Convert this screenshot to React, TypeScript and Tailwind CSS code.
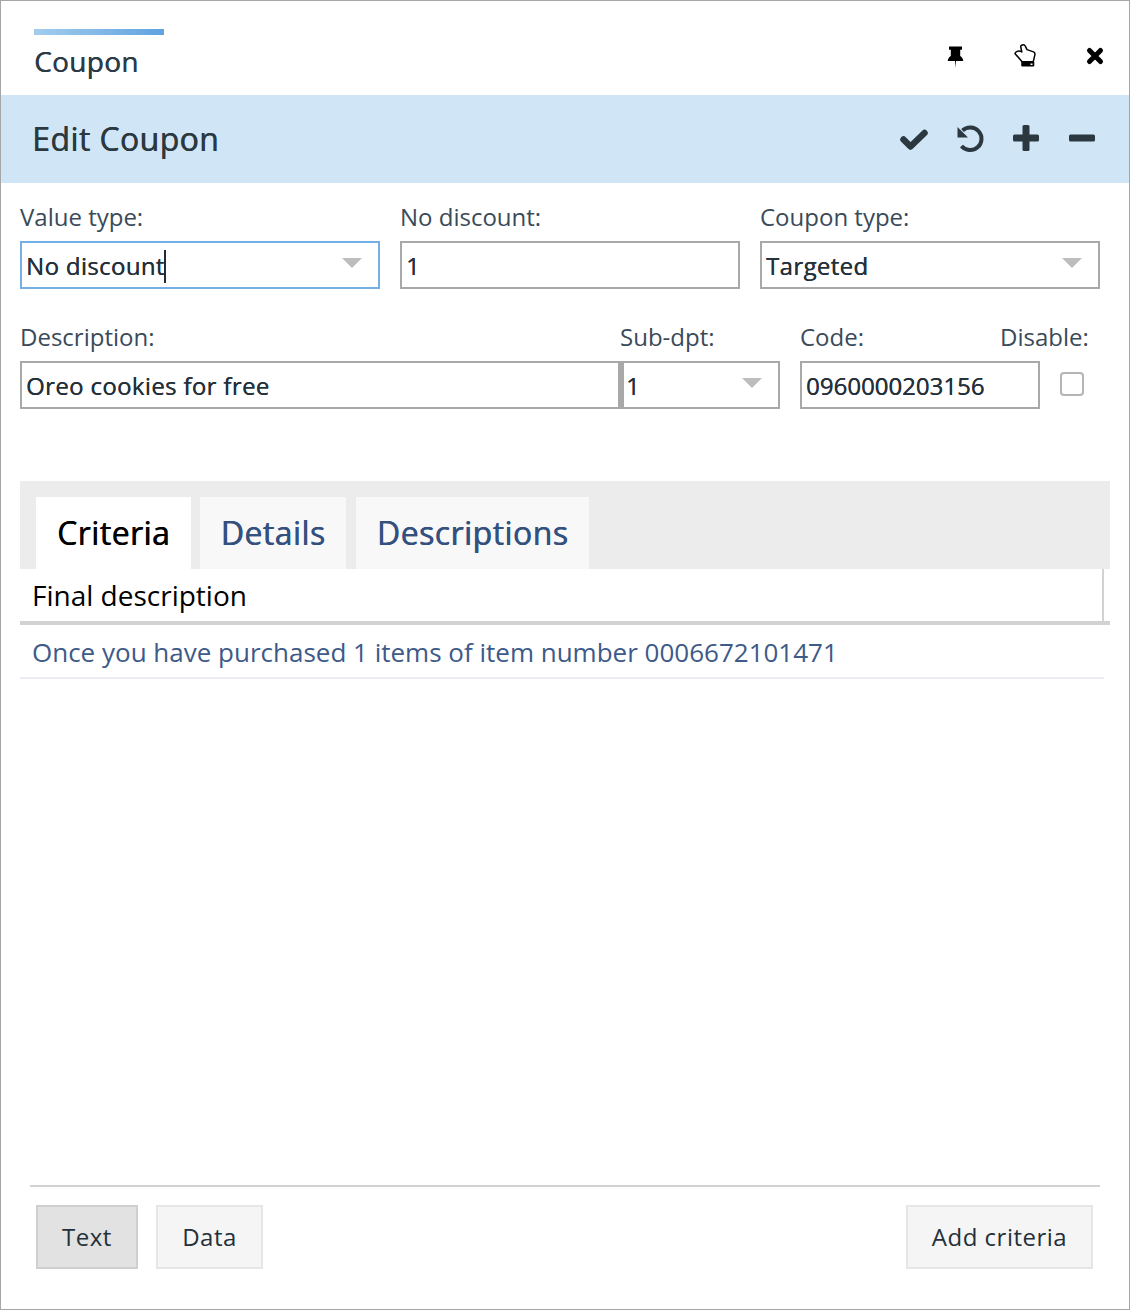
import { type ReactNode } from "react";

function Label({ children, className = "" }: { children: ReactNode; className?: string }) {
  return <div className={`h-[42px] text-[24px] leading-[36px] text-[#3a4a58] ${className}`}>{children}</div>;
}

function Field({ children, className = "", arrow = false }: { children: ReactNode; className?: string; arrow?: boolean }) {
  return (
    <div className={`flex h-[48px] items-center justify-between border-2 border-[#a9a9a9] pl-[4px] pr-[16px] pt-[2px] text-[24px] text-[#24303a] [text-shadow:0.3px_0_0_currentColor] ${className}`}>
      <span className="flex items-center">{children}</span>
      {arrow && <span className="mb-[6px] h-0 w-0 border-x-[10px] border-t-[10px] border-x-transparent border-t-[#bdbdbd]" />}
    </div>
  );
}

function Btn({ children, className = "", active = false }: { children: ReactNode; className?: string; active?: boolean }) {
  return (
    <div className={`flex h-[64px] items-center justify-center border-2 text-[24px] tracking-[0.5px] text-[#24303a] ${active ? "border-[#cfcfcf] bg-[#e2e2e2]" : "border-[#e6e6e6] bg-[#f5f5f5]"} ${className}`}>
      {children}
    </div>
  );
}

function Pin() {
  return (
    <svg viewBox="0 0 24 26" className="h-[26px] w-[24px]" fill="#000">
      <path d="M6 3.500h13v3.200h-1.800v6.300c1.500 1 3 2.500 3 5h-7.200l-.5 7-.5-7H4.800c0-2.500 1.500-4 3-5V6.700H6z" />
    </svg>
  );
}

function Hand() {
  return (
    <svg viewBox="0 0 24 24" className="h-[24px] w-[24px]" fill="none" stroke="#000" strokeWidth="1.500" strokeLinejoin="round">
      <path d="M10.300.8c-1.500 0-2.800.8-2.500 2.200l1 5c-1.500-1-3.300-1.200-4.600-.6-1.300.6-2.300 1.500-2.100 2.300l7 8h11.200l1.500-6.500c.3-1.300 0-2.800-1.300-3.300l-6.500-2.300-1.700-3.500c-.3-.8-1-1.300-2-1.300z" fill="#fff" />
      <path d="M8.800 18h12v4h-12z" fill="#000" stroke="#000" strokeWidth="1" />
      <path d="M17.500 19.500h2v1.500h-2z" fill="#fff" stroke="none" />
    </svg>
  );
}

function Times() {
  return (
    <svg viewBox="0 0 24 24" className="h-[24px] w-[24px]" fill="none" stroke="#000" strokeWidth="5" strokeLinecap="round">
      <path d="M6.500 6.500l11 11M17.500 6.500l-11 11" />
    </svg>
  );
}

function Check() {
  return (
    <svg viewBox="0 0 28 28" className="h-[28px] w-[28px]" fill="none" stroke="#2b3840" strokeWidth="6.500" strokeLinecap="round" strokeLinejoin="round">
      <path d="M3.500 14.500l7 7L24.500 8" />
    </svg>
  );
}

function Undo() {
  return (
    <svg viewBox="0 0 28 28" className="h-[28px] w-[28px]" fill="none" stroke="#2b3840">
      <path d="M6.500 5.500A11.300 11.300 0 1 1 5.500 21" strokeWidth="4" />
      <path d="M1.500 2v10.500H12z" fill="#2b3840" stroke="none" />
    </svg>
  );
}

function Plus() {
  return (
    <svg viewBox="0 0 28 28" className="mb-[3px] h-[28px] w-[28px]" fill="#2b3840">
      <rect x="1" y="10.500" width="26" height="7" rx="1.500" />
      <rect x="10.500" y="1" width="7" height="26" rx="1.500" />
    </svg>
  );
}

function Minus() {
  return (
    <svg viewBox="0 0 28 28" className="mb-[3px] h-[28px] w-[28px]" fill="#2b3840">
      <rect x="1" y="10.500" width="26" height="7" rx="1.500" />
    </svg>
  );
}

export default function App() {
  return (
    <div className="flex h-[1310px] w-[1130px] flex-col border border-[#a6a6a6] bg-white font-['Open_Sans',sans-serif]">
      <div className="flex h-[94px] justify-between pl-[33px] pr-[22px]">
        <div className="mt-[28px] w-[130px]">
          <div className="h-[6px] bg-gradient-to-r from-[#a3ccee] to-[#5fa3e0]" />
          <div className="mt-[7px] text-[28px] font-medium leading-[38px] tracking-[0.3px] text-[#2b3a46] [text-shadow:0.4px_0_0_currentColor]">Coupon</div>
        </div>
        <div className="mt-[43px] flex h-[24px] items-center gap-[46px] text-black">
          <Pin />
          <Hand />
          <Times />
        </div>
      </div>

      <div className="flex h-[88px] items-center justify-between bg-[#d0e6f7] pl-[31px] pr-[33px] text-[#2b3840]">
        <div className="text-[32px] font-medium leading-[44px] tracking-[0.4px] [text-shadow:0.6px_0_0_currentColor]">Edit Coupon</div>
        <div className="flex items-center gap-[28px]">
          <Check />
          <Undo />
          <Plus />
          <Minus />
        </div>
      </div>

      <div className="px-[19px] pt-[16px]">
        <div className="flex gap-[20px]">
          <div className="w-[360px]">
            <Label>Value type:</Label>
            <Field arrow className="!border-[#74b0e6] tracking-[0.35px]">
              No discount<span className="-ml-[1px] h-[33px] w-[2px] bg-[#1d2c3a]" />
            </Field>
          </div>
          <div className="w-[340px]">
            <Label>No discount:</Label>
            <Field>1</Field>
          </div>
          <div className="w-[340px]">
            <Label>Coupon type:</Label>
            <Field arrow className="tracking-[0.35px]">Targeted</Field>
          </div>
        </div>

        <div className="mt-[30px] flex">
          <div className="w-[600px]">
            <Label>Description:</Label>
            <Field className="tracking-[0.35px]">Oreo cookies for free</Field>
          </div>
          <div className="w-[160px]">
            <Label>Sub-dpt:</Label>
            <Field arrow className="!border-l-[4px] !pl-[2px]">1</Field>
          </div>
          <div className="ml-[20px] w-[240px]">
            <Label>Code:</Label>
            <Field>0960000203156</Field>
          </div>
          <div className="w-[49px]">
            <Label className="-ml-[40px] whitespace-nowrap">Disable:</Label>
            <div className="ml-[20px] mt-[11px] h-[24px] w-[24px] rounded-[4px] border-2 border-[#b5b5b5]" />
          </div>
        </div>

        <div className="mt-[72px] flex h-[88px] w-[1090px] items-end bg-[#ececec] pl-[16px]">
          <div className="flex h-[72px] w-[155px] items-center justify-center bg-white text-[32px] font-medium tracking-[0.45px] text-black [text-shadow:0.6px_0_0_currentColor]">Criteria</div>
          <div className="ml-[9px] flex h-[72px] w-[146px] items-center justify-center bg-[#f8f8f8] text-[32px] font-medium tracking-[0.45px] text-[#34507f] [text-shadow:0.6px_0_0_currentColor]">Details</div>
          <div className="ml-[10px] flex h-[72px] w-[233px] items-center justify-center bg-[#f8f8f8] text-[32px] font-medium tracking-[0.45px] text-[#34507f] [text-shadow:0.6px_0_0_currentColor]">Descriptions</div>
        </div>
        <div className="w-[1090px] border-b-[4px] border-[#d2d2d2]">
          <div className="flex h-[52px] w-[1084px] items-center border-r-2 border-[#d2d2d2] pl-[12px] text-[28px] text-black">Final description</div>
        </div>
        <div className="flex h-[54px] w-[1084px] items-center border-b-2 border-[#ebedf2] pl-[12px] pt-[2px] text-[26px] text-[#3d5a88]">
          Once you have purchased 1 items of item number 0006672101471
        </div>
      </div>

      <div className="mt-auto px-[29px] pb-[40px]">
        <div className="h-[2px] bg-[#d2d2d2]" />
        <div className="mt-[18px] flex items-center justify-between pl-[6px] pr-[7px]">
          <div className="flex gap-[18px]">
            <Btn active className="w-[102px]">Text</Btn>
            <Btn className="w-[107px]">Data</Btn>
          </div>
          <Btn className="w-[187px]">Add criteria</Btn>
        </div>
      </div>
    </div>
  );
}
